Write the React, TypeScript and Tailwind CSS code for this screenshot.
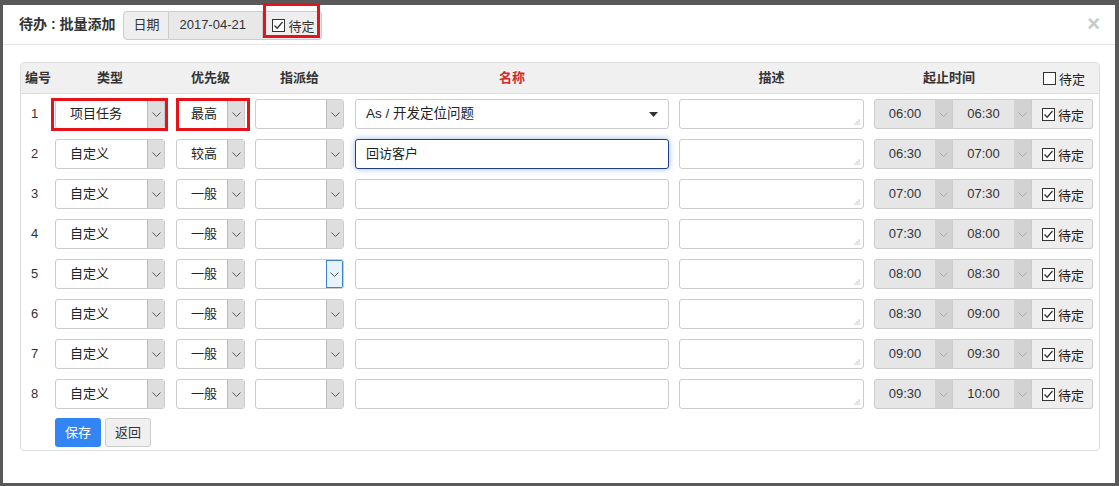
import React from 'react';

const FONT = "font-['Liberation_Sans','Noto_Sans_CJK_SC',sans-serif]";

const Chevron: React.FC<{ light?: boolean }> = ({ light }) => (
    <svg width="9" height="5" viewBox="0 0 9 5" fill="none">
        <path d="M0.5 0.5 L4.5 4.5 L8.5 0.5" stroke={light ? '#aaa' : '#555'} strokeWidth="1" />
    </svg>
);

const CheckBox: React.FC<{ checked?: boolean }> = ({ checked }) => (
    <svg width="13" height="13" viewBox="0 0 13 13" fill="none" className="shrink-0">
        <rect x="0.5" y="0.5" width="12" height="12" fill="#fff" stroke="#333" />
        {checked && <path d="M2.5 6.5 L5.2 9.2 L10.5 3" stroke="#333" strokeWidth="1.3" />}
    </svg>
);

const ResizeGrip = () => (
    <svg width="6" height="6" viewBox="0 0 6 6" className="absolute right-[3px] bottom-[3px]">
        <rect x="4.5" y="0.5" width="1" height="1" fill="#999" />
        <rect x="2.5" y="2.5" width="1" height="1" fill="#999" />
        <rect x="4.5" y="2.5" width="1" height="1" fill="#999" />
        <rect x="0.5" y="4.5" width="1" height="1" fill="#999" />
        <rect x="2.5" y="4.5" width="1" height="1" fill="#999" />
        <rect x="4.5" y="4.5" width="1" height="1" fill="#999" />
    </svg>
);

interface SelectProps {
    value: string;
    width: string;
    arrowFocus?: boolean;
}

const Select: React.FC<SelectProps> = ({ value, width, arrowFocus }) => (
    <div className={`flex h-[30px] ${width} shrink-0 overflow-hidden rounded-[3px] border border-[#ccc] bg-white`}>
        <span className="flex-1 pl-[14px] text-[13px] leading-[28px] text-[#222]">{value}</span>
        {arrowFocus ? (
            <span className="flex w-[17px] items-center justify-center border border-[#3b82c9] bg-[#e8f2fb]">
                <Chevron />
            </span>
        ) : (
            <span className="flex w-[17px] items-center justify-center border-l border-[#bbb] bg-[#dedede]">
                <Chevron />
            </span>
        )}
    </div>
);

const TimeSelect: React.FC<{ value: string; first?: boolean }> = ({ value, first }) => (
    <div className={`flex h-[30px] w-[79px] border border-[#ccc] bg-[#e6e6e6] ${first ? 'rounded-l-[3px]' : 'border-l-0'}`}>
        <span className="flex-1 text-center text-[13px] leading-[28px] text-[#333]">{value}</span>
        <span className="flex w-[17px] items-center justify-center bg-[#d2d2d2]">
            <Chevron light />
        </span>
    </div>
);

interface Row {
    type: string;
    priority: string;
    name?: string;
    start: string;
    end: string;
}

const rows: Row[] = [
    { type: '项目任务', priority: '最高', start: '06:00', end: '06:30' },
    { type: '自定义', priority: '较高', name: '回访客户', start: '06:30', end: '07:00' },
    { type: '自定义', priority: '一般', start: '07:00', end: '07:30' },
    { type: '自定义', priority: '一般', start: '07:30', end: '08:00' },
    { type: '自定义', priority: '一般', start: '08:00', end: '08:30' },
    { type: '自定义', priority: '一般', start: '08:30', end: '09:00' },
    { type: '自定义', priority: '一般', start: '09:00', end: '09:30' },
    { type: '自定义', priority: '一般', start: '09:30', end: '10:00' },
];

const TaskRow: React.FC<{ row: Row; index: number }> = ({ row, index }) => (
    <div className="flex h-[30px] items-center">
        <div className="w-[34px] shrink-0 pl-[10px] text-[13px] text-[#333]">{index + 1}</div>
        <div className="relative">
            <Select value={row.type} width="w-[110px]" />
            {index === 0 && <div className="absolute -top-[1px] -bottom-[2px] -left-[4px] -right-[3px] border-[3px] border-[#e8131a]" />}
        </div>
        <div className="relative ml-[11px]">
            <Select value={row.priority} width="w-[69px]" />
            {index === 0 && <div className="absolute -top-[1px] -bottom-[2px] left-0 -right-[5px] border-[3px] border-[#e8131a]" />}
        </div>
        <div className="ml-[10px]">
            <Select value="" width="w-[89px]" arrowFocus={index === 4} />
        </div>
        {index === 0 ? (
            <div className="ml-[11px] flex h-[30px] w-[314px] items-center justify-between rounded-[3px] border border-[#ccc] bg-white pr-[10px] pl-[10px]">
                <span className="text-[13.5px] text-[#222]">As / 开发定位问题</span>
                <svg width="9" height="5" viewBox="0 0 9 5"><path d="M0 0 L9 0 L4.5 5 Z" fill="#333" /></svg>
            </div>
        ) : index === 1 ? (
            <div className="ml-[11px] flex h-[30px] w-[314px] items-center rounded-[3px] border border-[#1d3f86] bg-white pl-[10px] shadow-[0_0_6px_rgba(102,140,220,0.6)]">
                <span className="text-[13px] text-[#222]">{row.name}</span>
            </div>
        ) : (
            <div className="ml-[11px] h-[30px] w-[314px] rounded-[3px] border border-[#ccc] bg-white" />
        )}
        <div className="relative ml-[10px] h-[30px] w-[185px] rounded-[3px] border border-[#ccc] bg-white">
            <ResizeGrip />
        </div>
        <div className="ml-[10px] flex">
            <TimeSelect value={row.start} first />
            <TimeSelect value={row.end} />
            <div className="flex h-[30px] w-[61px] items-center gap-[3px] rounded-r-[3px] border border-l-0 border-[#ccc] bg-[#eee] pl-[10px]">
                <CheckBox checked />
                <span className="mt-[3px] text-[13px] text-[#222]">待定</span>
            </div>
        </div>
    </div>
);

export default function App() {
    return (
        <div className={`${FONT} h-[486px] w-[1119px] overflow-hidden bg-[#595959] pt-[5px] pl-[3px]`}>
            <div className="h-[478px] w-[1112px] bg-white">
                {/* modal header */}
                <div className="flex h-[40px] items-center border-b border-[#e5e5e5] pl-[16px] pr-[15px]">
                    <h3 className="text-[14px] font-bold text-[#333]">待办 : 批量添加</h3>
                    <div className="relative ml-[8px] flex h-[29px] mt-[1px] text-[13px] text-[#333]">
                        <span className="flex w-[46px] items-center justify-center rounded-l-[4px] border border-[#ccc] bg-[#eee]">日期</span>
                        <span className="flex w-[94px] items-center border border-l-0 border-[#ccc] bg-[#e8e8e8] pl-[10px]">2017-04-21</span>
                        <span className="flex w-[59px] items-center gap-[3px] rounded-r-[4px] border border-l-0 border-[#ccc] bg-[#eee] pl-[9px]">
                            <CheckBox checked />
                            <span className="mt-[3px]">待定</span>
                        </span>
                        <div className="absolute -top-[8px] left-[140px] h-[35px] w-[57px] border-[3px] border-[#e8131a]" />
                    </div>
                    <span className="ml-auto mb-[2px] text-[22px] leading-none font-bold text-[#c8c8c8]">×</span>
                </div>

                {/* panel */}
                <div className="mt-[17px] ml-[17px] w-[1080px] rounded-[4px] border border-[#ddd]">
                    <div className="flex h-[31px] items-center border-b border-[#ddd] bg-[#f0f0f0] text-[13px] font-bold text-[#333]">
                        <div className="w-[34px] shrink-0 pl-[4px]">编号</div>
                        <div className="w-[110px] text-center">类型</div>
                        <div className="ml-[11px] w-[69px] text-center">优先级</div>
                        <div className="ml-[10px] w-[89px] text-center">指派给</div>
                        <div className="ml-[11px] w-[314px] text-center text-[#d42a2a]">名称</div>
                        <div className="ml-[10px] w-[185px] text-center">描述</div>
                        <div className="ml-[10px] w-[150px] text-center">起止时间</div>
                        <div className="ml-[19px] flex items-center gap-[3px] font-normal text-[#222]">
                            <CheckBox />
                            <span className="mt-[3px]">待定</span>
                        </div>
                    </div>
                    <div className="flex flex-col gap-[10px] pt-[5px] pb-[3px]">
                        {rows.map((r, i) => <TaskRow key={i} row={r} index={i} />)}
                        <div className="-mt-[1px] flex gap-[4px] pl-[34px]">
                            <button className="h-[29px] w-[46px] rounded-[3px] bg-[#3384f4] text-[13px] text-white">保存</button>
                            <button className="h-[29px] w-[46px] rounded-[3px] border border-[#ccc] bg-[#f0f0f0] text-[13px] text-[#333]">返回</button>
                        </div>
                    </div>
                </div>
            </div>
        </div>
    );
}
